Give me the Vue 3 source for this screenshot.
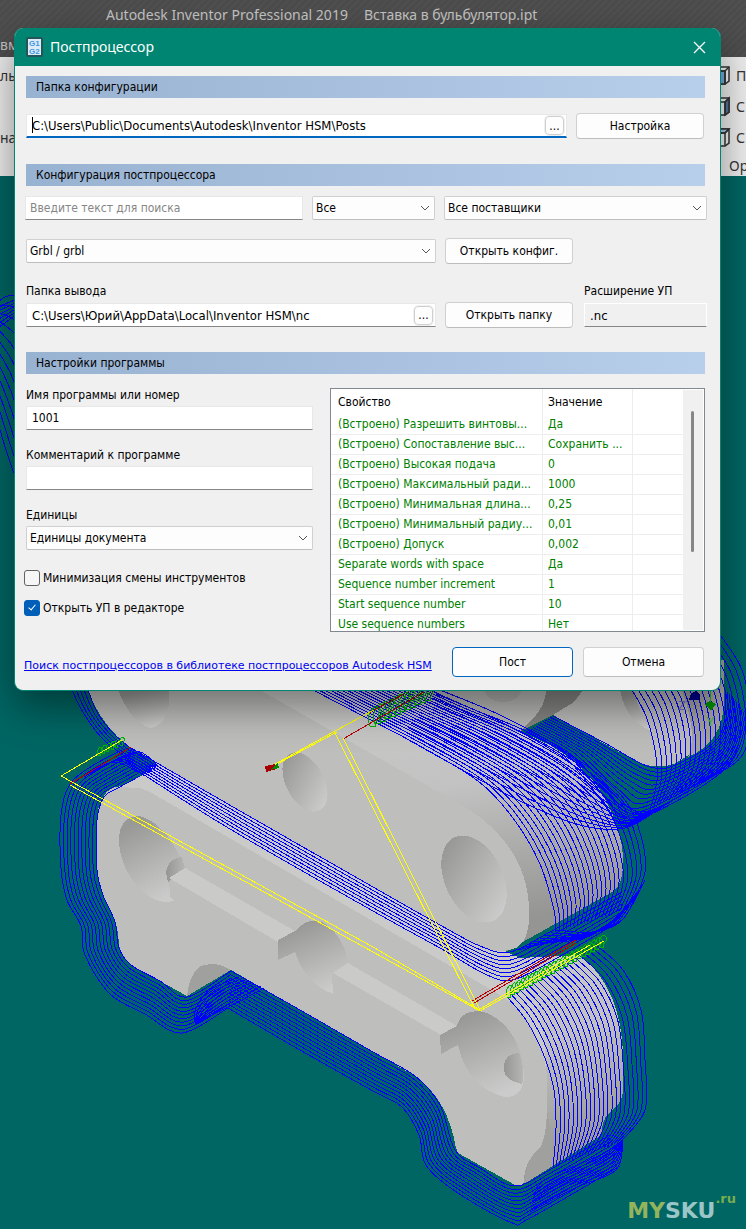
<script setup>
import { ref } from 'vue'

const configFolder = ref('C:\\Users\\Public\\Documents\\Autodesk\\Inventor HSM\\Posts')
const outputFolder = ref('C:\\Users\\Юрий\\AppData\\Local\\Inventor HSM\\nc')
const extension = ref('.nc')
const search = ref('')
const programName = ref('1001')
const comment = ref('')
const minimize = ref(false)
const openEditor = ref(true)

const rows = [
  ['(Встроено) Разрешить винтовы...', 'Да'],
  ['(Встроено) Сопоставление выс...', 'Сохранить ...'],
  ['(Встроено) Высокая подача', '0'],
  ['(Встроено) Максимальный ради...', '1000'],
  ['(Встроено) Минимальная длина...', '0,25'],
  ['(Встроено) Минимальный радиу...', '0,01'],
  ['(Встроено) Допуск', '0,002'],
  ['Separate words with space', 'Да'],
  ['Sequence number increment', '1'],
  ['Start sequence number', '10'],
  ['Use sequence numbers', 'Нет'],
]

// Smooth curve through a list of points (Catmull-Rom as cubic Béziers).
function smooth(p) {
  let d = `M${p[0][0]},${p[0][1]}`
  for (let i = 0; i < p.length - 1; i++) {
    const a = p[i - 1] || p[i]
    const b = p[i]
    const c = p[i + 1]
    const e = p[i + 2] || c
    const n = (v) => v.toFixed(1)
    d += `C${n(b[0] + (c[0] - a[0]) / 6)},${n(b[1] + (c[1] - a[1]) / 6)} ${n(c[0] - (e[0] - b[0]) / 6)},${n(c[1] - (e[1] - b[1]) / 6)} ${n(c[0])},${n(c[1])}`
  }
  return d
}

// Passes of the cutter, spread evenly between an inner and an outer contour.
function passes(inner, outer, count) {
  let d = ''
  for (let k = 0; k < count; k++) {
    const t = k / (count - 1)
    d += smooth(inner.map((q, i) => [q[0] + (outer[i][0] - q[0]) * t, q[1] + (outer[i][1] - q[1]) * t]))
  }
  return d
}

function coil(x1, y1, x2, y2, turns, r) {
  let d = ''
  for (let k = 0; k < turns; k++) {
    const t = k / (turns - 1)
    const x = x1 + (x2 - x1) * t
    const y = y1 + (y2 - y1) * t
    d += `M${x},${y - r}q${r},${r / 2} ${r / 2},${r}t${-r / 2},${r}h${-r / 2}q${-r / 2},${-r} ${r / 2},${-2 * r}`
  }
  return d
}

const toolpaths = [
  passes([[140, 776], [118, 788], [104, 797], [97, 820], [97, 870], [103, 895], [115, 922], [119, 948], [131, 965], [160, 981], [187, 997], [231, 971]],
    [[122, 750], [92, 766], [70, 784], [61, 815], [61, 868], [67, 900], [81, 926], [85, 955], [110, 994], [145, 1014], [182, 1033], [228, 1008]], 11),
  passes([[131, 748], [240, 811], [373, 887], [440, 925], [480, 946], [510, 952], [550, 932], [622, 892]],
    [[124, 762], [230, 829], [373, 911], [440, 948], [485, 974], [512, 980], [550, 962], [622, 920]], 8),
  passes([[118, 758], [140, 752], [158, 766]], [[84, 777], [114, 762], [145, 776]], 8),
  passes([[313, 690], [365, 717], [420, 746], [478, 781], [513, 818], [540, 864], [554, 910], [556, 932]],
    [[430, 690], [470, 708], [530, 733], [590, 768], [625, 800], [641, 836], [645, 872], [630, 908]], 22),
  passes([[400, 735], [450, 763], [520, 801], [580, 825], [625, 828], [660, 808]],
    [[440, 690], [500, 715], [560, 748], [600, 782], [640, 812], [690, 790]], 12),
  passes([[518, 950], [548, 943], [585, 938], [620, 918]], [[556, 930], [592, 932], [622, 920], [645, 880]], 8),
  passes([[508, 998], [526, 1020], [543, 1053], [554, 1090], [556, 1130], [553, 1167]],
    [[596, 945], [623, 970], [641, 1010], [645, 1060], [645, 1110], [620, 1142]], 22),
  passes([[231, 971], [300, 1010], [373, 1052], [415, 1076], [440, 1105], [455, 1150], [480, 1168], [515, 1186], [553, 1168], [610, 1135]],
    [[228, 1008], [300, 1050], [373, 1091], [402, 1107], [419, 1135], [426, 1165], [455, 1191], [510, 1222], [530, 1218], [620, 1166]], 11),
  passes([[239, 977], [210, 990], [196, 1008], [195, 1022]], [[264, 988], [240, 1001], [218, 1012], [195, 1024]], 9),
  passes([[535, 1190], [548, 1178], [600, 1155], [623, 1140]], [[530, 1212], [575, 1188], [616, 1170], [623, 1140]], 9),
  passes([[72, 690], [84, 714], [102, 738], [124, 756]], [[88, 690], [98, 714], [114, 734], [134, 751]], 5),
  passes([[553, 716], [603, 742], [650, 767], [680, 763], [720, 735], [726, 690]],
    [[523, 733], [565, 757], [602, 800], [630, 822], [724, 770], [748, 715]], 13),
  passes([[632, 690], [646, 716], [655, 750], [657, 780], [650, 810]],
    [[721, 636], [742, 670], [751, 720], [741, 757], [710, 778]], 20),
  passes([[-20, 350], [-8, 400], [6, 450], [20, 490]], [[-8, 308], [8, 296], [26, 306], [40, 380]], 12),
  passes([[-5, 308], [20, 298]], [[-5, 330], [20, 312]], 6),
]
</script>

<template>
  <main class="screen">
    <svg class="scene" viewBox="0 0 746 1229" preserveAspectRatio="xMidYMin slice" aria-hidden="true">
      <defs>
        <linearGradient id="hole" x1="0.2" y1="0" x2="0.6" y2="1">
          <stop offset="0.1" stop-color="#999997" />
          <stop offset="0.45" stop-color="#adadab" />
          <stop offset="1" stop-color="#cbcbcb" />
        </linearGradient>
        <linearGradient id="side" x1="0" y1="0" x2="0.25" y2="1">
          <stop offset="0" stop-color="#cccccb" />
          <stop offset="0.5" stop-color="#c2c2c2" />
          <stop offset="1" stop-color="#959593" />
        </linearGradient>
        <linearGradient id="bore" x1="0" x2="1">
          <stop offset="0" stop-color="#969694" />
          <stop offset="1" stop-color="#b6b6b5" />
        </linearGradient>
      </defs>

      <g shape-rendering="crispEdges">
        <!-- upper right part -->
        <path fill="#bcbcbb" d="M570 690L553 715L630 758Q655 772 676 763L700 748Q724 732 724 690V660H570Z" />
        <path fill="#a2a2a0" d="M682 690Q698 735 688 757Q724 742 724 700V660H680Z" />
        <path fill="url(#hole)" d="M620 690Q626 722 652 731Q638 712 634 690Z" />

        <!-- middle part -->
        <path fill="url(#side)" d="M240 680L403 680L519 732Q570 748 600 790Q623 828 623 862Q623 886 612 892L505 952L300 800Z" />
        <path fill="#b9b9b8" d="M400 680H550L545 708L519 732L500 732L440 700Z" />
        <path fill="#858583" d="M546 690H583L574 702L553 715L519 732Q546 710 546 690Z" />

        <!-- lower part -->
        <path fill="url(#side)" d="M480 940L520 958L580 955Q623 990 623 1060V1092Q622 1104 608 1114Q601 1122 602 1135L524 1184L480 1060Z" />
        <path fill="#cacac9" d="M114 789L141 776L158 762L480 943L520 960Q545 1010 546 1070L500 1080L120 840Z" />
        <path fill="#bebebd" d="M131 788Q109 782 102 800Q97 806 97 825V870Q97 886 113 917Q118 925 119 945Q121 957 131 965L187 996L231 970L415 1076Q448 1100 456 1148L458 1153L515 1185Q524 1187 524 1180Q525 1160 540 1148Q546 1138 547 1110V1075Q540 1018 495 992L150 792Q138 786 131 788Z" />
        <path fill="#a0a09e" d="M524 1184Q525 1160 540 1148Q547 1138 547 1110L556 1164Z" />
        <path fill="#a0a09e" d="M187 996Q189 976 199 967Q214 960 231 970Z" />

        <!-- front face of the middle part -->
        <path fill="#bebebd" d="M88 690Q101 726 131 748L470 942Q495 956 516 948Q530 940 529 912Q529 850 470 810L260 690Z" />
        <path fill="url(#hole)" d="M118 690Q132 724 151 728Q171 724 169 690Z" />
        <ellipse cx="305" cy="782" rx="19" ry="32" fill="url(#hole)" transform="rotate(-28 305 782)" />
        <ellipse cx="474" cy="879" rx="29" ry="46" fill="url(#hole)" transform="rotate(-25 474 879)" />
        <ellipse cx="503" cy="690" rx="18" ry="12" fill="#adadac" />

        <!-- bores and grooves of the lower part -->
        <path fill="url(#hole)" d="M119 840Q119 817 139 816Q165 822 184 865L169 878L170 896L174 901Q155 906 136 885Q119 862 119 840Z" />
        <path fill="url(#bore)" d="M166 873Q168 858 182 857L185 868L168 882Z" />
        <path fill="#cacac9" d="M169 878L185 868L295 931L278 942Z" />
        <path fill="url(#hole)" d="M278 940L297 930Q305 918 322 922Q345 936 348 965L332 974L333 994Q306 984 295 952L278 960Z" />
        <path fill="#cacac9" d="M333 973L348 963L457 1026L441 1035Z" />
        <path fill="url(#hole)" d="M440 1035L457 1026Q462 1008 484 1012Q512 1022 522 1058Q530 1098 505 1097Q468 1088 458 1045L441 1054Z" />
        <path fill="url(#bore)" d="M519 1053Q503 1054 504 1069Q504 1080 522 1084Q526 1070 519 1053Z" />

        <path v-for="(d, i) in toolpaths" :key="i" class="cut" :d="d" />

        <g fill="none" stroke="#00b400">
          <path :d="coil(375, 716, 430, 690, 12, 10)" />
          <path :d="coil(510, 991, 603, 941, 22, 6)" />
          <path :d="coil(100, 751, 122, 741, 6, 4)" />
        </g>
        <g fill="none" stroke="#b80000">
          <path d="M70 784L131 747M472 1001L576 940M474 1003L576 943M335 731L404 694M343 739L424 692" />
        </g>
        <g fill="none" stroke="#ffff00">
          <path d="M122 740L61 776L373 947L480 1010M70 785L373 952L480 1011" />
          <path d="M268 768L335 731L374 710M275 765L337 732M334 731L472 1003M343 738L480 1010" />
          <path d="M472 1002L474 1007M480 1011L604 941M480 1009L590 945" />
        </g>
        <path fill="#a80000" d="M265 766L275 764L277 769L266 772Z" />
        <path fill="#008a00" d="M270 770L278 763L279 768Z" />
        <path fill="#00008c" d="M689 700L691 694L696 691L700 695V700Z" />
        <path fill="#009000" d="M705 704L710 701L716 704L711 711Z" />
        <path fill="none" stroke="#20b020" d="M710 690V702" />
      </g>
      <text x="678" y="710" fill="#6c6cc8">Z</text>
      <text x="706" y="726" fill="#45b545">Y</text>
    </svg>

    <header class="appbar">
      <span>Autodesk Inventor Professional 2019</span>
      <span>Вставка в бульбулятор.ipt</span>
      <span class="tab">вм</span>
    </header>
    <section class="ribbon">
      <div class="edge"><span>ль</span><span>на</span></div>
      <ul class="tools">
        <li v-for="(t, i) in ['П', 'С', 'С']" :key="i">
          <svg width="17" height="21" viewBox="0 0 17 21" fill="#f5f5f5" stroke="#333" stroke-width="1.5">
            <path d="M1 6L6 2H15V16L11 19H1Z" />
            <path v-if="i === 0" fill="#74a9dd" d="M1 6H11V19H1Z" />
            <path v-if="i === 1" fill="#52739f" d="M11 6L15 2V16L11 19Z" />
            <path v-if="i === 2" fill="#a9c9eb" d="M1 6L6 2H15L11 6Z" />
            <path fill="none" d="M1 6H11V19M11 6L15 2" />
          </svg>
          <span>{{ t }}</span>
        </li>
        <li class="group">Ор</li>
      </ul>
    </section>

    <section class="dialog" role="dialog" aria-labelledby="dialog-title">
      <header class="titlebar">
        <svg width="17" height="20" viewBox="0 0 17 20" aria-hidden="true">
          <rect x="1" y="1" width="15" height="18" rx="1" fill="#dcebf5" stroke="#23565b" stroke-width="2" />
          <text x="3" y="9">G1</text>
          <text x="3" y="17">G2</text>
        </svg>
        <h1 id="dialog-title">Постпроцессор</h1>
        <button class="close" aria-label="Закрыть">
          <svg width="13" height="13" viewBox="0 0 13 13" fill="none" stroke="#fff" stroke-width="1.3"><path d="M1 1L12 12M12 1L1 12" /></svg>
        </button>
      </header>

      <form class="body" @submit.prevent>
        <h2>Папка конфигурации</h2>
        <div class="row config">
          <div class="field focus">
            <input v-model="configFolder" class="path" aria-label="Папка конфигурации" />
            <button type="button" class="dots">...</button>
            <i class="caret"></i>
          </div>
          <button type="button" class="btn">Настройка</button>
        </div>

        <h2>Конфигурация постпроцессора</h2>
        <div class="row filters">
          <div class="field"><input v-model="search" class="search" placeholder="Введите текст для поиска" aria-label="Поиск" /></div>
          <div class="select">
            <select aria-label="Тип"><option>Все</option></select>
            <svg viewBox="0 0 10 6"><path d="M1 1L5 5L9 1" /></svg>
          </div>
          <div class="select">
            <select aria-label="Поставщик"><option>Все поставщики</option></select>
            <svg viewBox="0 0 10 6"><path d="M1 1L5 5L9 1" /></svg>
          </div>
        </div>
        <div class="row post">
          <div class="select">
            <select aria-label="Постпроцессор"><option>Grbl / grbl</option></select>
            <svg viewBox="0 0 10 6"><path d="M1 1L5 5L9 1" /></svg>
          </div>
          <button type="button" class="btn">Открыть конфиг.</button>
        </div>
        <div class="row output">
          <div class="stack">
            <label for="out">Папка вывода</label>
            <div class="field">
              <input id="out" v-model="outputFolder" class="path" />
              <button type="button" class="dots">...</button>
            </div>
          </div>
          <button type="button" class="btn">Открыть папку</button>
          <div class="stack">
            <label for="ext">Расширение УП</label>
            <div class="field readonly"><input id="ext" v-model="extension" class="path" readonly /></div>
          </div>
        </div>

        <h2>Настройки программы</h2>
        <div class="settings">
          <div class="left">
            <div class="stack">
              <label for="name">Имя программы или номер</label>
              <div class="field"><input id="name" v-model="programName" /></div>
            </div>
            <div class="stack">
              <label for="comment">Комментарий к программе</label>
              <div class="field"><input id="comment" v-model="comment" /></div>
            </div>
            <div class="stack">
              <label for="units">Единицы</label>
              <div class="select">
                <select id="units"><option>Единицы документа</option></select>
                <svg viewBox="0 0 10 6"><path d="M1 1L5 5L9 1" /></svg>
              </div>
            </div>
            <div class="checks">
              <label><input v-model="minimize" type="checkbox" />Минимизация смены инструментов</label>
              <label><input v-model="openEditor" type="checkbox" />Открыть УП в редакторе</label>
            </div>
          </div>
          <div class="grid">
            <table>
              <colgroup><col class="c1" /><col class="c2" /><col /></colgroup>
              <thead><tr><th>Свойство</th><th>Значение</th><th></th></tr></thead>
              <tbody>
                <tr v-for="r in rows" :key="r[0]"><td>{{ r[0] }}</td><td>{{ r[1] }}</td><td></td></tr>
              </tbody>
            </table>
            <div class="scroll"><i></i></div>
          </div>
        </div>

        <footer class="actions">
          <a href="#">Поиск постпроцессоров в библиотеке постпроцессоров Autodesk HSM</a>
          <button type="submit" class="btn primary">Пост</button>
          <button type="button" class="btn">Отмена</button>
        </footer>
      </form>
    </section>

    <p class="mark"><span>MY</span>SKU<sup>.ru</sup></p>
  </main>
</template>

<style>
body {
  margin: 0;
  background: #006663;
}
</style>

<style scoped>
.screen {
  position: relative;
  min-height: 100vh;
  overflow: hidden;
  background: #006663;
  font: 12px/16px "DejaVu Sans Condensed", "DejaVu Sans", sans-serif;
  font-stretch: condensed;
  color: #000;
}
.scene {
  position: absolute;
  top: 0;
  left: 0;
  width: 100%;
  height: 100%;
}
.scene text {
  font: 13px "Liberation Sans", sans-serif;
}
.cut {
  fill: none;
  stroke: #0000ff;
}
.appbar {
  position: relative;
  height: 57px;
  box-sizing: border-box;
  padding: 4px 0 0 106px;
  display: flex;
  gap: 16px;
  background: repeating-linear-gradient(135deg, #4c4c4c 0 3px, #505050 3px 5px);
  color: #c2c2c2;
  font: 14px/22px "Noto Sans", sans-serif;
  white-space: nowrap;
}
.tab {
  position: absolute;
  left: 0;
  top: 34px;
}
.ribbon {
  position: relative;
  height: 119px;
  display: flex;
  justify-content: space-between;
  background: #ededed;
  color: #333;
  font: 14px/22px "Noto Sans", sans-serif;
}
.edge {
  display: grid;
  align-content: start;
  gap: 40px;
  padding-top: 8px;
}
.tools {
  margin: 0;
  padding: 3px 0 0;
  width: 32px;
  list-style: none;
}
.tools li {
  display: flex;
  align-items: center;
  gap: 5px;
  height: 31px;
}
.tools li.group {
  height: 26px;
  padding-left: 15px;
}
.tools svg {
  flex: none;
}
.dialog {
  position: absolute;
  top: 28px;
  left: 14px;
  right: 25px;
  box-sizing: border-box;
  border: 1px solid #008573;
  border-top: 0;
  border-radius: 9px;
  overflow: hidden;
  background: #f0f0f0;
  box-shadow: 0 16px 40px rgba(0, 0, 0, 0.42);
}
.titlebar {
  height: 38px;
  padding: 0 14px 0 11px;
  display: flex;
  align-items: center;
  gap: 7px;
  background: #008573;
  color: #fff;
}
.titlebar text {
  font: bold 8px "Liberation Sans", sans-serif;
  fill: #3f97e5;
}
.titlebar h1 {
  flex: 1;
  margin: 0;
  font: 14px/22px "Noto Sans", sans-serif;
}
.close {
  display: flex;
  padding: 0;
  border: 0;
  background: none;
}
.body {
  padding: 10px 15px 13px 11px;
}
h2 {
  margin: 0;
  padding-left: 10px;
  font: inherit;
  line-height: 22px;
  background: linear-gradient(90deg, #98b2d1, #b8cfeb);
}
.row {
  display: grid;
  column-gap: 9px;
}
.config {
  grid-template-columns: 1fr 128px;
  align-items: center;
  padding: 15px 1px 25px 0;
}
.filters {
  grid-template-columns: 278px 123px 1fr;
  margin: 10px -2px 18px -1px;
}
.post {
  grid-template-columns: 410px 128px;
  align-items: center;
}
.output {
  grid-template-columns: 410px 128px minmax(0, 1fr);
  align-items: end;
  margin: 19px -2px 25px 0;
}
.output .stack:last-child {
  padding-left: 2px;
}
.stack {
  display: grid;
  grid-template-columns: minmax(0, 1fr);
  gap: 4px;
}
.output .btn {
  margin-bottom: -1px;
}
.field {
  position: relative;
  height: 24px;
  box-sizing: border-box;
  display: flex;
  align-items: center;
  background: #fff;
  border: 1px solid #e8e8e8;
  border-bottom-color: #868686;
}
.field input {
  flex: 1;
  min-width: 0;
  height: 100%;
  box-sizing: border-box;
  padding: 0 5px;
  border: 0;
  outline: 0;
  background: none;
  color: inherit;
  font: inherit;
}
.field .path {
  font-size: 13px;
}
.field input::placeholder {
  color: #868686;
  opacity: 1;
}
.field .search {
  padding-left: 4px;
}
.focus {
  border-bottom: 2px solid #0067c0;
}
.readonly {
  background: #f0f0f0;
  border-color: #fff #fff #868686;
}
.caret {
  position: absolute;
  left: 5px;
  top: 2px;
  width: 1px;
  height: 16px;
  background: #000;
}
.dots {
  width: 19px;
  height: 19px;
  margin-right: 2px;
  padding: 0;
  border: 1px solid #cfcfcf;
  border-radius: 4px;
  background: #fdfdfd;
  outline: 1px solid #f0f0f0;
  font: inherit;
  color: #000;
}
.btn {
  height: 26px;
  padding: 0;
  border: 1px solid #d0d0d0;
  border-bottom-color: #bdbdbd;
  border-radius: 4px;
  background: #fdfdfd;
  color: #000;
  font: inherit;
}
.select {
  position: relative;
  height: 24px;
}
.select select {
  appearance: none;
  width: 100%;
  height: 100%;
  padding: 0 24px 0 3px;
  border: 1px solid #d0d0d0;
  border-bottom-color: #bdbdbd;
  border-radius: 2px;
  background: #fdfdfd;
  color: #000;
  font: inherit;
}
.select svg {
  position: absolute;
  right: 5px;
  top: 9px;
  width: 10px;
  height: 6px;
  fill: none;
  stroke: #555;
  pointer-events: none;
}
.settings {
  display: grid;
  grid-template-columns: 287px 1fr;
  gap: 17px;
  padding-top: 14px;
}
.left {
  display: grid;
  align-content: start;
  gap: 17px;
  margin-top: -1px;
}
.left .stack {
  gap: 3px;
}
.checks {
  display: grid;
  gap: 14px;
  margin: 3px 0 0 -2px;
}
.checks label {
  display: flex;
  align-items: center;
  gap: 3px;
}
.checks input {
  appearance: none;
  position: relative;
  width: 16px;
  height: 16px;
  margin: 0;
  border: 1px solid #626262;
  border-radius: 3px;
  background: #f6f6f6;
}
.checks input:checked {
  border-color: #005fb8;
  background: #005fb8;
}
.checks input:checked::after {
  content: "";
  position: absolute;
  left: 5px;
  top: 2px;
  width: 3px;
  height: 6px;
  border: solid #fff;
  border-width: 0 1px 1px 0;
  transform: rotate(40deg);
}
.grid {
  display: flex;
  height: 244px;
  box-sizing: border-box;
  border: 1px solid #828790;
  background: #fff;
  overflow: hidden;
}
table {
  flex: 1;
  min-width: 0;
  table-layout: fixed;
  border-collapse: separate;
  border-spacing: 0;
  color: #008000;
}
.c1 {
  width: 212px;
}
.c2 {
  width: 90px;
}
th,
td {
  box-sizing: border-box;
  padding: 0 0 0 5px;
  overflow: hidden;
  white-space: nowrap;
  text-align: left;
  font-weight: normal;
  border-right: 1px solid #ededed;
}
th:first-child,
td:first-child {
  padding-left: 7px;
}
th:last-child,
td:last-child {
  border-right: 0;
}
th {
  height: 26px;
  color: #000;
}
td {
  height: 20px;
  line-height: 19px;
  border-bottom: 1px solid #ededed;
}
.scroll {
  flex: none;
  width: 20px;
  margin: 1px 1px 1px 0;
  background: #f0f0f0;
}
.scroll i {
  display: block;
  width: 3px;
  height: 141px;
  margin: 21px 0 0 8px;
  border-radius: 2px;
  background: #868686;
}
.actions {
  display: grid;
  grid-template-columns: 1fr 121px 121px;
  gap: 10px;
  align-items: center;
  margin: 15px 1px 0 -2px;
}
.actions a {
  padding-top: 8px;
  color: #0000f0;
  font: 11px/16px "DejaVu Sans", sans-serif;
  font-stretch: normal;
  white-space: nowrap;
}
.actions .btn {
  height: 30px;
}
.actions .primary {
  border-color: #0067c0;
}
.mark {
  position: absolute;
  right: 10px;
  bottom: 4px;
  margin: 0;
  display: flex;
  font: bold 22px/28px "DejaVu Sans", sans-serif;
  color: #9cc5c8;
}
.mark span {
  color: #93b35c;
}
.mark sup {
  font-size: 13px;
  line-height: 16px;
  margin-top: -6px;
  color: #78ad50;
}
</style>
